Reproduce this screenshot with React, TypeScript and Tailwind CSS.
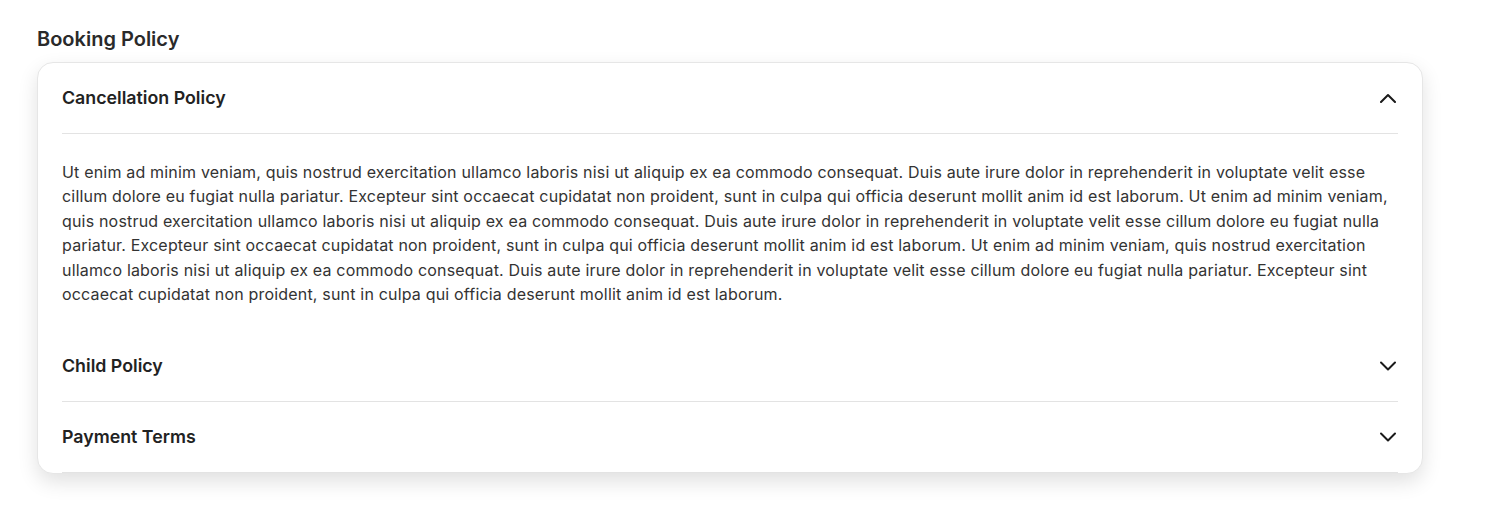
import { useState } from "react";

const body =
  "Ut enim ad minim veniam, quis nostrud exercitation ullamco laboris nisi ut aliquip ex ea commodo consequat. Duis aute irure dolor in reprehenderit in voluptate velit esse cillum dolore eu fugiat nulla pariatur. Excepteur sint occaecat cupidatat non proident, sunt in culpa qui officia deserunt mollit anim id est laborum. Ut enim ad minim veniam, quis nostrud exercitation ullamco laboris nisi ut aliquip ex ea commodo consequat. Duis aute irure dolor in reprehenderit in voluptate velit esse cillum dolore eu fugiat nulla pariatur. Excepteur sint occaecat cupidatat non proident, sunt in culpa qui officia deserunt mollit anim id est laborum. Ut enim ad minim veniam, quis nostrud exercitation ullamco laboris nisi ut aliquip ex ea commodo consequat. Duis aute irure dolor in reprehenderit in voluptate velit esse cillum dolore eu fugiat nulla pariatur. Excepteur sint occaecat cupidatat non proident, sunt in culpa qui officia deserunt mollit anim id est laborum.";

const items = [
  { title: "Cancellation Policy", content: body },
  { title: "Child Policy", content: body },
  { title: "Payment Terms", content: body },
];

function Chevron({ up }: { up: boolean }) {
  return (
    <svg width="18" height="10" viewBox="0 0 18 10" fill="none" className="shrink-0">
      <path
        d={up ? "M2 9 L9 2 L16 9" : "M2 1.5 L9 8.5 L16 1.5"}
        stroke="#1a1a1a"
        strokeWidth="2"
        strokeLinecap="round"
        strokeLinejoin="round"
      />
    </svg>
  );
}

export default function App() {
  const [open, setOpen] = useState(0);

  return (
    <div className="min-h-screen bg-white px-[37px] pt-[26px] font-['Inter','Noto_Sans',sans-serif]">
      <h2 className="text-[20px] font-semibold leading-[26px] text-[#2a2a2a]">Booking Policy</h2>
      <div className="mt-[10px] w-[1386px] overflow-hidden rounded-2xl border border-[#e6e6e6] bg-white px-[24px] shadow-[0_8px_20px_rgba(0,0,0,0.12)]">
        {items.map((item, i) => (
          <div key={item.title}>
            <button
              onClick={() => setOpen(open === i ? -1 : i)}
              className="flex h-[71px] w-full items-center justify-between border-b border-[#e3e3e3] pr-[1px] text-left"
            >
              <span className="text-[17.8px] font-semibold text-[#222]">{item.title}</span>
              <Chevron up={open === i} />
            </button>
            {open === i && (
              <p className="pt-[26px] pb-[25px] text-[16px] leading-[24.4px] tracking-[0.18px] text-[#333]">
                {item.content}
              </p>
            )}
          </div>
        ))}
      </div>
    </div>
  );
}
